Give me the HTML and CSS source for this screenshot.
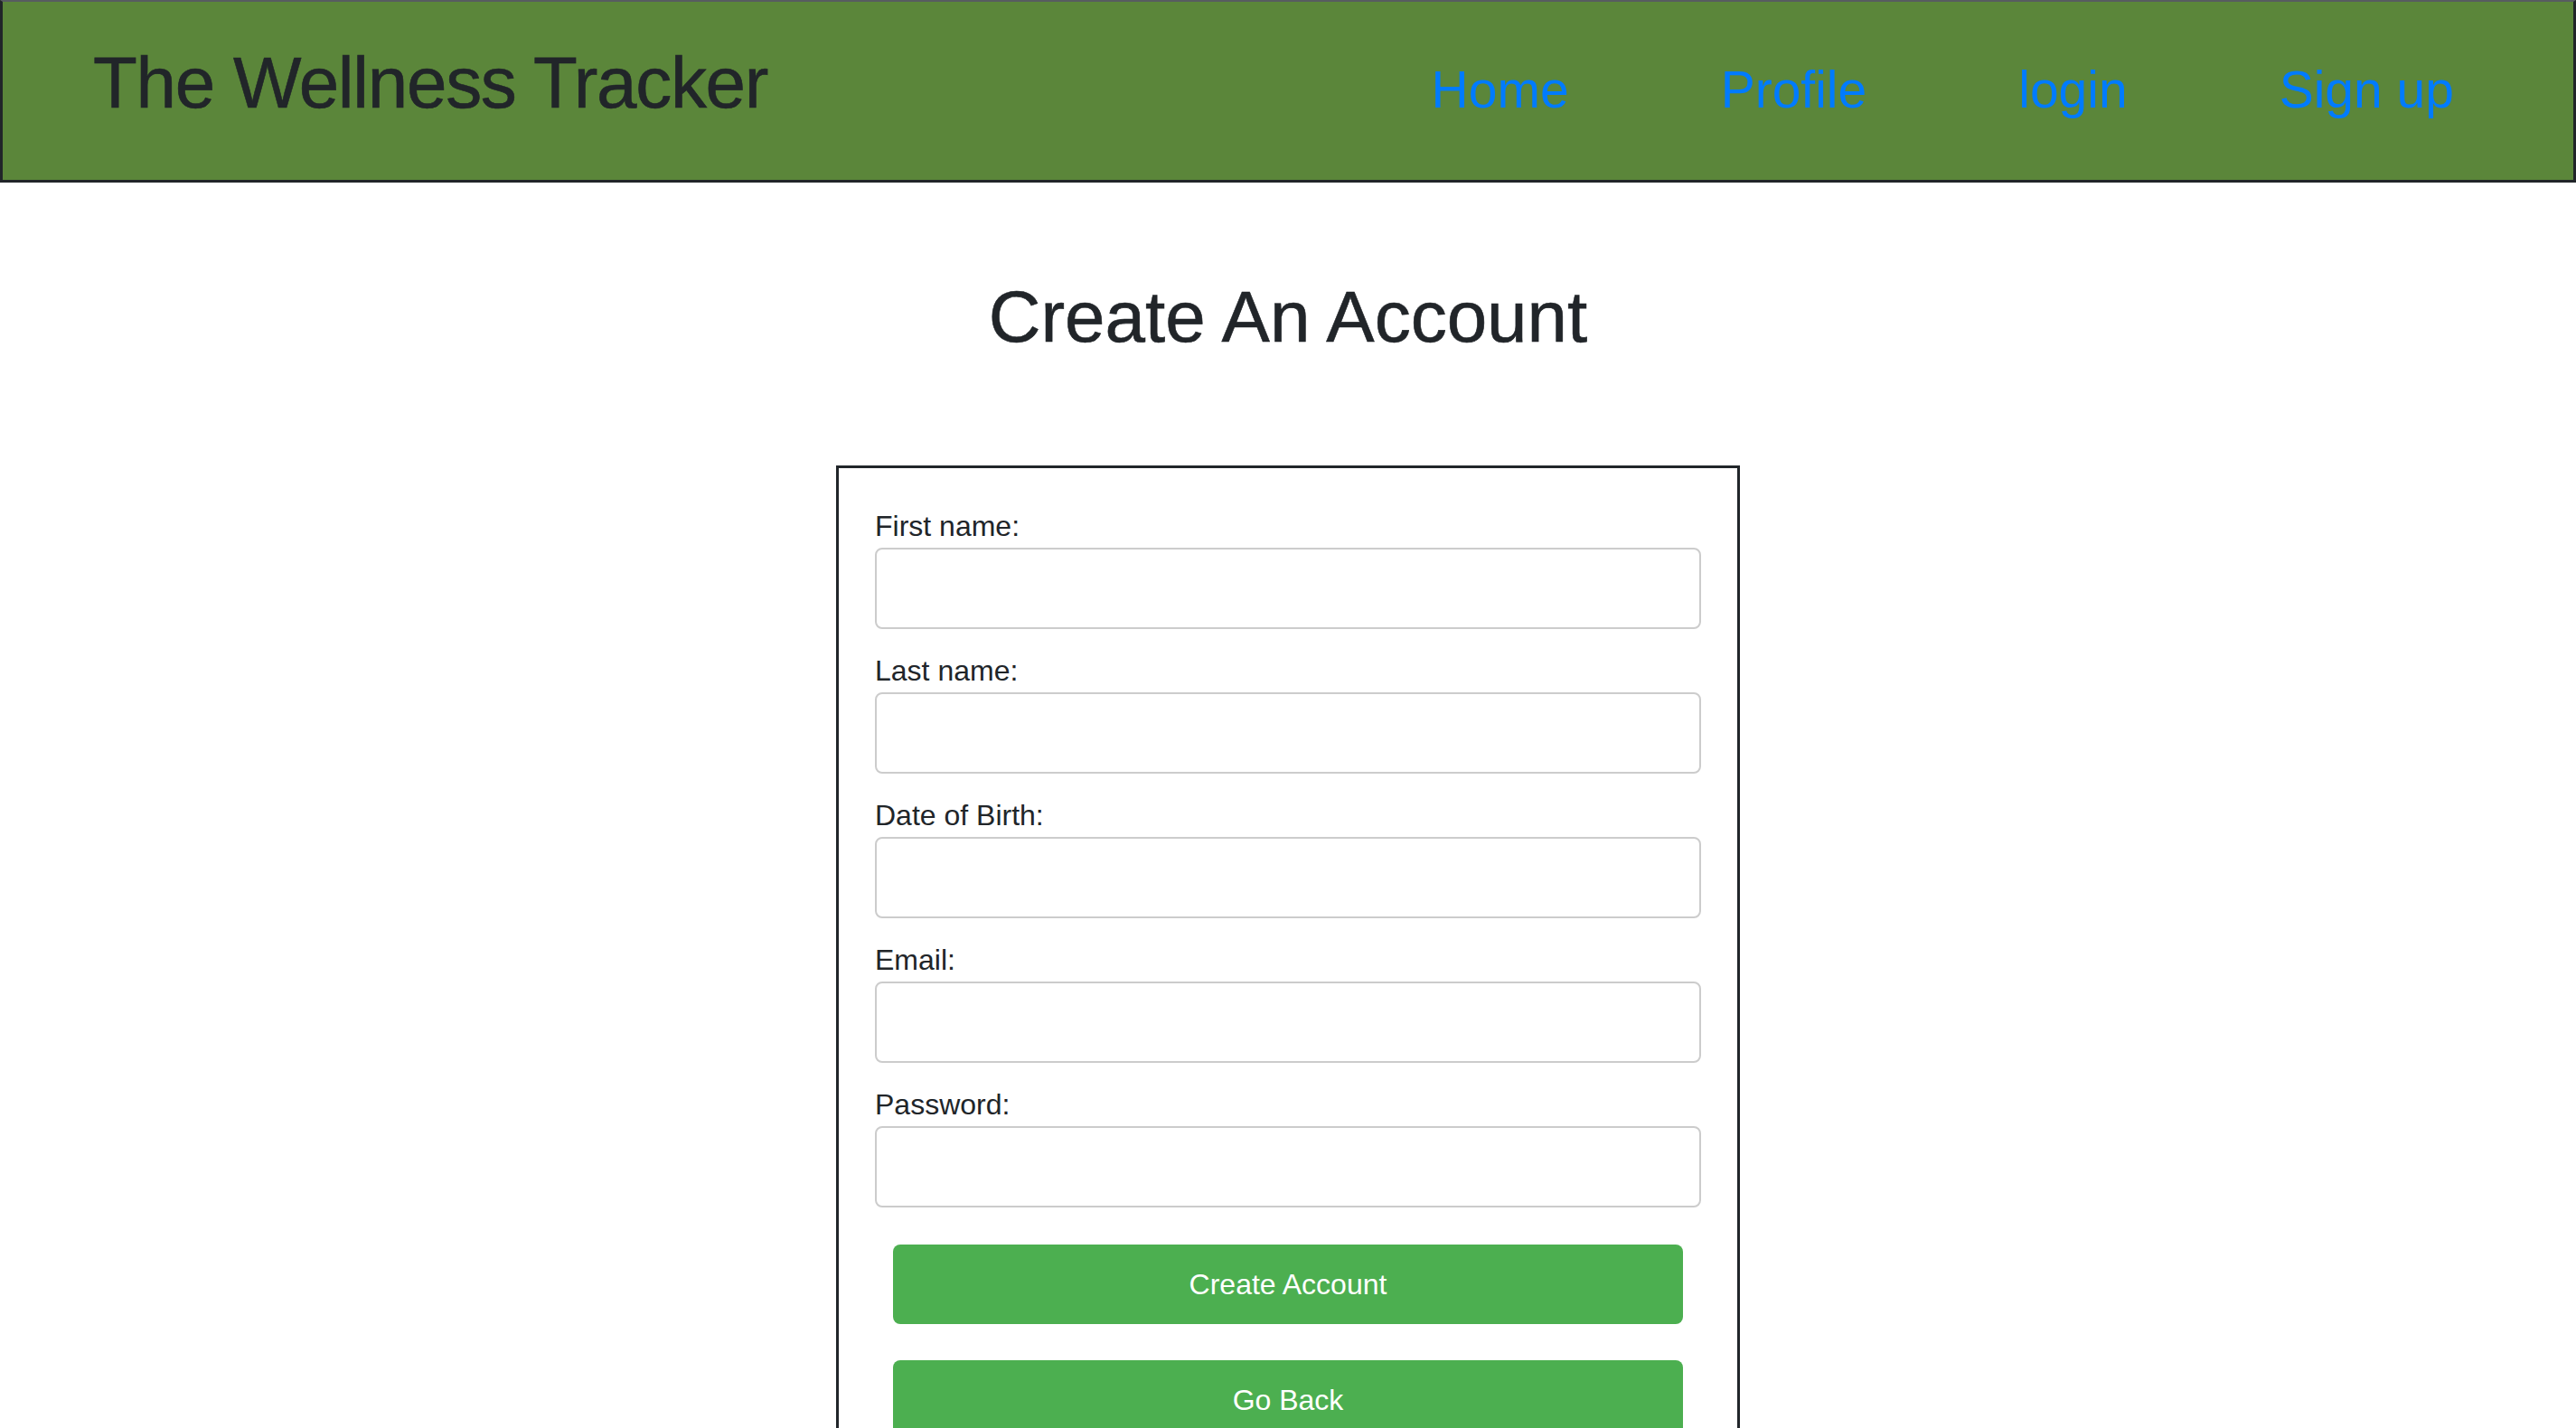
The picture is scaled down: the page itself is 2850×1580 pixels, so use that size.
FILE: index.html
```html
<!DOCTYPE html>
<html lang="en">
<head>
<meta charset="utf-8">
<title>The Wellness Tracker - Sign up</title>
<link rel="stylesheet" href="styles.css">
</head>
<body>
<header class="topbar">
  <h1 class="brand">The Wellness Tracker</h1>
  <nav class="nav">
    <a class="nav-link" href="#">Home</a>
    <a class="nav-link" href="#">Profile</a>
    <a class="nav-link" href="#">login</a>
    <a class="nav-link" href="#">Sign up</a>
  </nav>
</header>
<main class="main">
  <h1 class="page-title">Create An Account</h1>
  <form class="signup-card">
    <div class="field">
      <label class="field-label" for="fname">First name:</label>
      <input class="field-input" id="fname" type="text">
    </div>
    <div class="field">
      <label class="field-label" for="lname">Last name:</label>
      <input class="field-input" id="lname" type="text">
    </div>
    <div class="field">
      <label class="field-label" for="dob">Date of Birth:</label>
      <input class="field-input" id="dob" type="text">
    </div>
    <div class="field">
      <label class="field-label" for="email">Email:</label>
      <input class="field-input" id="email" type="text">
    </div>
    <div class="field">
      <label class="field-label" for="pw">Password:</label>
      <input class="field-input" id="pw" type="password">
    </div>
    <div class="actions">
      <button class="btn" type="button">Create Account</button>
      <button class="btn" type="button">Go Back</button>
    </div>
  </form>
</main>
</body>
</html>
```
FILE: styles.css
```css
* {
  box-sizing: border-box;
}

html, body {
  margin: 0;
  padding: 0;
  background: #ffffff;
  color: #212529;
  font-family: "Liberation Sans", Arial, Helvetica, sans-serif;
}

.topbar {
  display: flex;
  align-items: baseline;
  justify-content: space-between;
  background: #5b863a;
  border: 3px solid #212529;
  border-top: 2px solid #575c60;
  padding: 42px 132px 59px 100px;
}

.brand {
  margin: 0;
  font-size: 80px;
  line-height: 96px;
  font-weight: 400;
  letter-spacing: -1.3px;
  color: #212529;
  -webkit-text-stroke: 0.6px #212529;
}

.nav {
  display: flex;
  align-items: baseline;
  gap: 168px;
}

.nav-link {
  font-size: 57px;
  line-height: 68px;
  color: #007bff;
  text-decoration: none;
}

.main {
  display: flex;
  flex-direction: column;
  align-items: center;
}

.page-title {
  margin: 101px 0 116px;
  font-size: 80px;
  line-height: 96px;
  font-weight: 400;
  letter-spacing: 0;
  color: #212529;
  -webkit-text-stroke: 0.6px #212529;
}

.signup-card {
  width: 1000px;
  border: 3px solid #212529;
  padding: 40px 40px 40px;
}

.field {
  display: flex;
  flex-direction: column;
  margin-bottom: 22px;
}

.field-label {
  font-size: 32px;
  line-height: 48px;
  color: #212529;
}

.field-input {
  height: 90px;
  width: 100%;
  border: 2px solid #cccccc;
  border-radius: 8px;
  background: #ffffff;
  font-size: 32px;
  padding: 0 24px;
  font-family: inherit;
}

.actions {
  display: flex;
  flex-direction: column;
  gap: 40px;
  margin: 41px 20px 0;
}

.btn {
  height: 88px;
  width: 100%;
  border: none;
  border-radius: 8px;
  background: #4caf50;
  color: #ffffff;
  font-family: inherit;
  font-size: 32px;
  cursor: pointer;
}
```
